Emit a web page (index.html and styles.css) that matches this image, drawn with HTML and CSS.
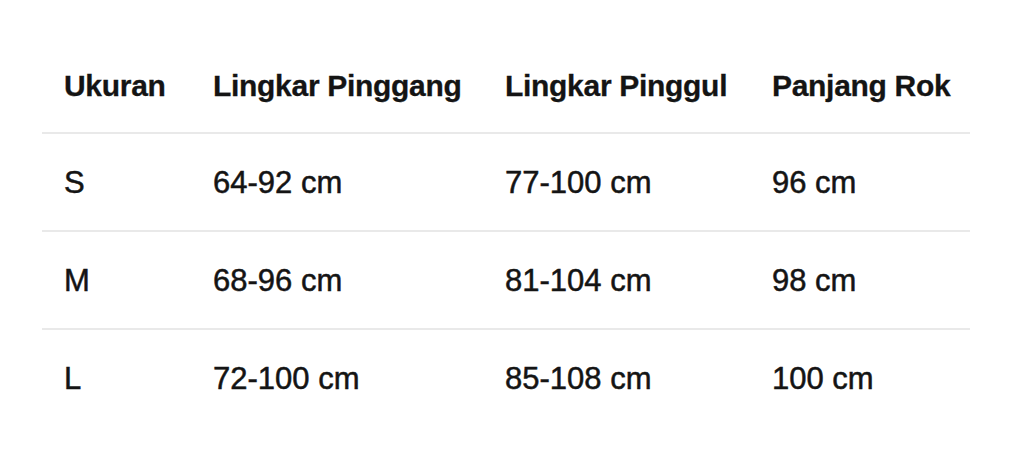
FILE: index.html
```html
<!DOCTYPE html>
<html lang="id">
<head>
<meta charset="utf-8">
<title>Ukuran</title>
<link rel="stylesheet" href="styles.css">
</head>
<body>
<div class="size-table">
  <div class="row head">
    <div class="cell">Ukuran</div>
    <div class="cell">Lingkar Pinggang</div>
    <div class="cell">Lingkar Pinggul</div>
    <div class="cell">Panjang Rok</div>
  </div>
  <div class="row">
    <div class="cell">S</div>
    <div class="cell">64-92 cm</div>
    <div class="cell">77-100 cm</div>
    <div class="cell">96 cm</div>
  </div>
  <div class="row">
    <div class="cell">M</div>
    <div class="cell">68-96 cm</div>
    <div class="cell">81-104 cm</div>
    <div class="cell">98 cm</div>
  </div>
  <div class="row last">
    <div class="cell">L</div>
    <div class="cell">72-100 cm</div>
    <div class="cell">85-108 cm</div>
    <div class="cell">100 cm</div>
  </div>
</div>
</body>
</html>
```
FILE: styles.css
```css
html, body {
  margin: 0;
  padding: 0;
  background: #ffffff;
}
body {
  font-family: "Liberation Sans", Arial, sans-serif;
  color: #141414;
}
.size-table {
  margin: 40px 0 0 42px;
  width: 928px;
}
.row {
  display: grid;
  grid-template-columns: 171px 292px 267px 198px;
  height: 96px;
  align-items: center;
  border-bottom: 2px solid #e9e9e9;
  font-size: 31px;
  line-height: 1;
  -webkit-text-stroke: 0.5px #141414;
}
.row.head {
  height: 92px;
  font-weight: 700;
  font-size: 30px;
  letter-spacing: -0.3px;
  -webkit-text-stroke: 0.3px #141414;
}
.row.last {
  border-bottom: none;
}
.cell {
  white-space: nowrap;
}
.cell:first-child {
  padding-left: 22px;
}
```
